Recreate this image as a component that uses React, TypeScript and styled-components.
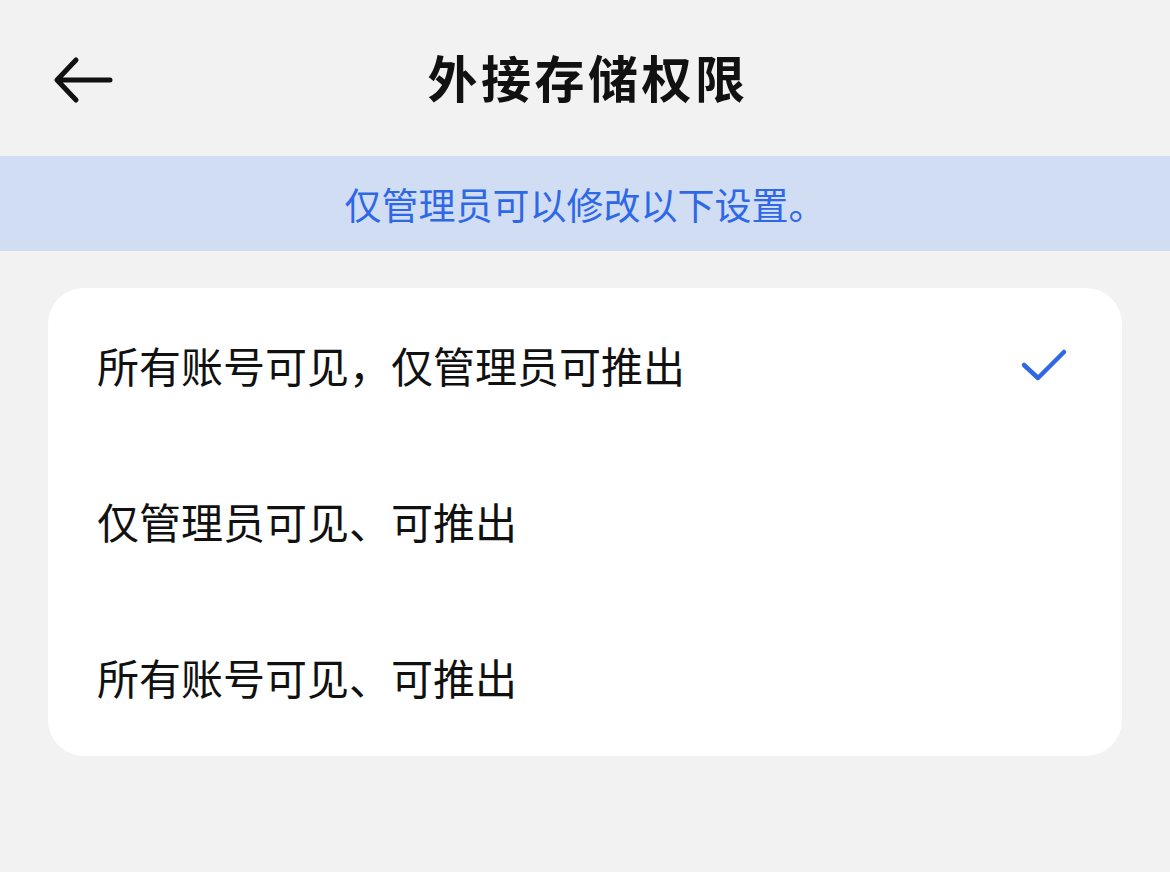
import styled, { createGlobalStyle } from "styled-components";

const GlobalStyle = createGlobalStyle`
  body {
    margin: 0;
    background: #f2f2f2;
    font-family: "Noto Sans CJK SC", "Noto Sans", sans-serif;
  }
`;

const options = [
  "所有账号可见，仅管理员可推出",
  "仅管理员可见、可推出",
  "所有账号可见、可推出",
];

const App = () => {
  const selected = 0;

  return (
    <Page>
      <GlobalStyle />
      <Header>
        <BackButton aria-label="返回">
          <svg width="64" height="48" viewBox="0 0 64 48" fill="none">
            <path
              d="M60 24H8M26 4L7 24l19 20"
              stroke="#111"
              strokeWidth="5"
              strokeLinecap="round"
              strokeLinejoin="round"
            />
          </svg>
        </BackButton>
        <Title>外接存储权限</Title>
      </Header>
      <Notice>仅管理员可以修改以下设置。</Notice>
      <Card>
        {options.map((label, i) => (
          <Option key={label}>
            <OptionLabel>{label}</OptionLabel>
            {i === selected && (
              <svg width="48" height="36" viewBox="0 0 48 36" fill="none">
                <path
                  d="M4 17l14 13L44 4"
                  stroke="#2f68e6"
                  strokeWidth="4.5"
                  strokeLinecap="round"
                  strokeLinejoin="round"
                />
              </svg>
            )}
          </Option>
        ))}
      </Card>
    </Page>
  );
};

export default App;

const Page = styled.div`
  min-height: 100vh;
  background: #f2f2f2;
`;

const Header = styled.header`
  position: relative;
  display: flex;
  align-items: center;
  justify-content: center;
  height: 156px;
  padding-bottom: 4px;
  box-sizing: border-box;
`;

const BackButton = styled.button`
  position: absolute;
  left: 50px;
  top: 56px;
  display: flex;
  padding: 0;
  border: none;
  background: none;
`;

const Title = styled.h1`
  margin: 0 0 0 6px;
  font-size: 50px;
  font-weight: 700;
  color: #111;
  letter-spacing: 3.5px;
`;

const Notice = styled.div`
  display: flex;
  align-items: center;
  justify-content: center;
  height: 95px;
  background: #d0ddf3;
  color: #2f68e6;
  font-size: 37px;
`;

const Card = styled.div`
  margin: 37px 48px 0 48px;
  background: #fff;
  border-radius: 36px;
`;

const Option = styled.div`
  display: flex;
  align-items: center;
  justify-content: space-between;
  height: 156px;
  padding: 0 54px 0 49px;
`;

const OptionLabel = styled.span`
  font-size: 42px;
  color: #111;
  margin-top: -3px;
`;
